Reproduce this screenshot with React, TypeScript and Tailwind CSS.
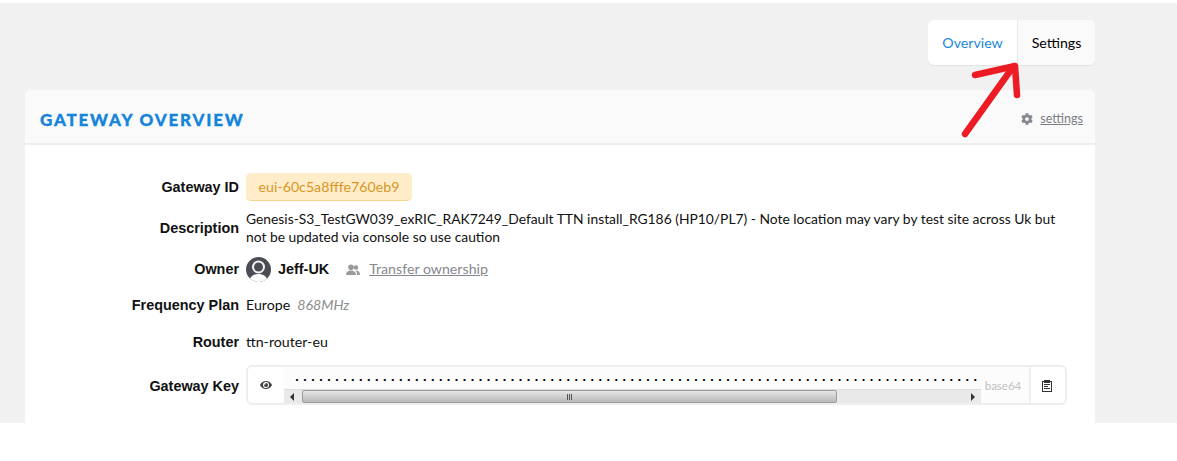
import { FaCog, FaEye } from "react-icons/fa";

const lato = "font-['Lato','Liberation_Sans',sans-serif]";

function Label({ children, className = "" }: { children: string; className?: string }) {
  return (
    <div className={`w-[221px] shrink-0 text-right font-['Liberation_Sans',sans-serif] text-[14.400px] font-bold text-[#111] pr-[7px] ${className}`}>
      {children}
    </div>
  );
}

function UserIcon() {
  return (
    <svg width="25" height="25" viewBox="0 0 25 25" className="shrink-0">
      <defs>
        <clipPath id="avatar">
          <circle cx="12.500" cy="12.500" r="12.500" />
        </clipPath>
      </defs>
      <g clipPath="url(#avatar)">
        <rect width="25" height="25" fill="#4a4e54" />
        <circle cx="12.500" cy="10" r="6.500" fill="#f4f4f4" />
        <circle cx="12.500" cy="10" r="4.500" fill="#4a4e54" />
        <path d="M3 25c1-6 5-8 9.500-8s8.500 2 9.500 8z" fill="#fbfbfb" />
      </g>
    </svg>
  );
}

function PeopleIcon() {
  return (
    <svg width="14" height="12" viewBox="0 0 14 12" fill="#9a9a9a" className="shrink-0">
      <circle cx="5" cy="3.200" r="2.800" />
      <path d="M0 11c0-3 2-4.500 5-4.500S10 8 10 11z" />
      <circle cx="10" cy="3.500" r="2.300" />
      <path d="M10.500 6.500c2 0 3.500 1.500 3.500 4.500h-3c0-2-.3-3.500-1.500-4.300z" />
    </svg>
  );
}

function ClipboardIcon() {
  return (
    <svg width="10" height="12" viewBox="0 0 10 12" fill="none" stroke="#333" strokeWidth="1">
      <rect x="0.500" y="1.500" width="9" height="10" />
      <rect x="2.500" y="0.500" width="5" height="2" fill="#333" />
      <path d="M2 4.500h6M2 6.500h4M2 8.500h6" />
    </svg>
  );
}

function ScrollBar() {
  return (
    <div className="flex h-[17px] items-stretch bg-[#e9e9e9] border-t border-[#dedede]">
      <div className="flex w-[18px] shrink-0 items-center justify-center pr-[2px]">
        <div className="h-0 w-0 border-y-[4px] border-r-[4px] border-y-transparent border-r-[#333]" />
      </div>
      <div className="flex w-[535px] shrink-0 items-center justify-center gap-[1px] rounded-[2px] border border-[#9c9c9c] bg-gradient-to-b from-[#e6e6e6] to-[#b9b9b9]">
        <span className="h-[6px] w-[1px] bg-[#555]" />
        <span className="h-[6px] w-[1px] bg-[#555]" />
        <span className="h-[6px] w-[1px] bg-[#555]" />
      </div>
      <div className="flex-1" />
      <div className="flex w-[17px] shrink-0 items-center justify-center">
        <div className="h-0 w-0 border-y-[4px] border-l-[4px] border-y-transparent border-l-[#333]" />
      </div>
    </div>
  );
}

export default function App() {
  return (
    <div className={`${lato} h-[461px] bg-white pt-[3px] text-[14.200px] text-[#111]`}>
      <div className="relative h-[420px] overflow-hidden bg-[#f1f1f1] px-[25px] pt-[17px] pr-[82px]">
        <div className="flex justify-end">
          <div className="flex h-[45px] items-stretch rounded-[6px] bg-white shadow-[0_1px_1px_rgba(0,0,0,0.06)]">
            <div className="flex w-[89px] items-center justify-center text-[#1c87dc]">Overview</div>
            <div className="flex w-[78px] items-center justify-center rounded-r-[6px] border-l border-[#e8e8e8] bg-[#fafafa] text-black">
              Settings
            </div>
          </div>
        </div>

        <div className="mt-[25px] h-[400px] rounded-t-[6px] bg-white">
          <div className="flex h-[55px] items-center justify-between rounded-t-[6px] border-b-2 border-[#eeeeee] bg-[#fafafa] pl-[15px] pr-[12px]">
            <h2 className="mt-[7px] font-['Lato',sans-serif] text-[17px] font-black uppercase tracking-[1.800px] text-[#1384da] [-webkit-text-stroke:0.3px_#1384da]">
              Gateway Overview
            </h2>
            <div className="mt-[5px] flex items-center gap-[7px] text-[12.600px] text-[#7b7f86]">
              <FaCog size={12} className="text-[#85888e]" />
              <span className="underline">settings</span>
            </div>
          </div>

          <div className="flex flex-col">
            <div className="mt-[28px] flex items-center">
              <Label className="translate-y-[1px]">Gateway ID</Label>
              <div className="flex h-[28px] w-[166px] items-center justify-center rounded-[5px] border-b border-[#fbd38d] bg-[#ffedca] text-[#d9951f]">
                eui-60c5a8fffe760eb9
              </div>
            </div>

            <div className="mt-[9px] flex items-center">
              <Label className="translate-y-[1px]">Description</Label>
              <div className="w-[815px] text-[13.850px] leading-[18px]">
                Genesis-S3_TestGW039_exRIC_RAK7249_Default TTN install_RG186 (HP10/PL7) - Note location may vary by test site across Uk but not be updated via console so use caution
              </div>
            </div>

            <div className="mt-[11px] flex h-[25px] items-center">
              <Label>Owner</Label>
              <UserIcon />
              <span className="ml-[7px] font-['Liberation_Sans',sans-serif] text-[14.400px] font-bold">Jeff-UK</span>
              <span className="ml-[17px]"><PeopleIcon /></span>
              <span className="ml-[9px] -translate-y-[1px] text-[#85888e] underline">Transfer ownership</span>
            </div>

            <div className="mt-[11px] flex h-[25px] items-center">
              <Label>Frequency Plan</Label>
              <span className="-translate-y-[1px]">Europe</span>
              <span className="ml-[7px] -translate-y-[1px] italic text-[#8d8d8d]">868MHz</span>
            </div>

            <div className="mt-[12px] flex h-[25px] items-center">
              <Label>Router</Label>
              <span className="-translate-y-[1px]">ttn-router-eu</span>
            </div>

            <div className="mt-[10px] flex items-center">
              <Label className="translate-y-[2px]">Gateway Key</Label>
              <div className="flex h-[40px] w-[821px] items-stretch rounded-[6px] border-2 border-[#eeeeee]">
                <div className="flex w-[36px] shrink-0 items-center justify-center">
                  <FaEye size={12} className="text-[#444]" />
                </div>
                <div className="flex w-[697px] shrink-0 flex-col justify-end overflow-hidden bg-[#fcfcfc]">
                  <div className="flex-1 whitespace-nowrap pl-[9px] font-['Liberation_Mono',monospace] text-[13.300px] leading-[22px] font-bold text-black">
                    {".".repeat(86)}
                  </div>
                  <ScrollBar />
                </div>
                <div className="flex flex-1 items-center justify-center bg-[#fcfcfc] pr-[4px] pt-[1px] text-[11.500px] text-[#c0c0c0]">
                  base64
                </div>
                <div className="flex w-[36px] shrink-0 items-center justify-center border-l-2 border-[#eeeeee] pr-[2px] pt-[1px]">
                  <ClipboardIcon />
                </div>
              </div>
            </div>
          </div>
        </div>

        <svg width="80" height="90" viewBox="0 0 80 90" className="absolute left-[950px] top-[57px]" fill="none" stroke="#ed1c24" strokeWidth="6.500" strokeLinecap="round" strokeLinejoin="round">
          <path d="M15 74L63 7" />
          <path d="M25 15L65 6L67 35" />
        </svg>
      </div>
    </div>
  );
}
